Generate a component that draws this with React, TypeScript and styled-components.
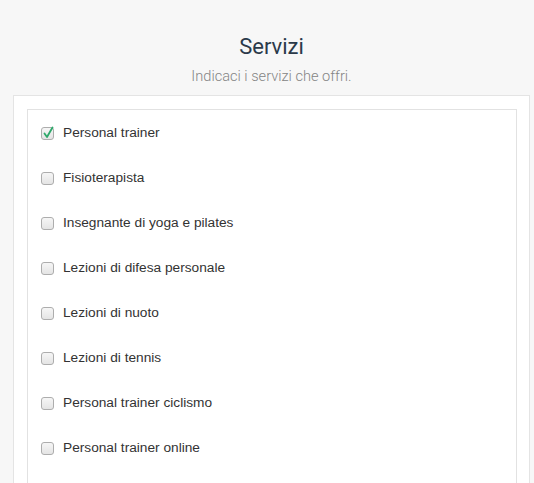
import React from 'react'
import styled, { createGlobalStyle } from 'styled-components'

const GlobalStyle = createGlobalStyle`
  html, body {
    margin: 0;
    padding: 0;
    background: #f7f7f7;
  }
`

const Page = styled.div`
  display: flex;
  flex-direction: column;
  height: 483px;
  overflow: hidden;
  padding-top: 34px;
  box-sizing: border-box;
`

const Header = styled.div`
  text-align: center;
  padding-left: 9px;
`

const Title = styled.h2`
  margin: 0;
  font-family: Roboto, "Liberation Sans", sans-serif;
  font-weight: 400;
  font-size: 22px;
  line-height: 26px;
  color: #2b3a4a;
`

const Subtitle = styled.p`
  margin: 3px 0 0;
  font-family: Roboto, "Liberation Sans", sans-serif;
  font-weight: 300;
  font-size: 14.6px;
  line-height: 26px;
  color: #858585;
`

const OuterCard = styled.div`
  flex: 1;
  display: flex;
  margin: 6px 4px 0 13px;
  background: #fff;
  border: 1px solid #e4e4e4;
  border-bottom: none;
  padding: 13px 12px 0 13px;
`

const InnerCard = styled.div`
  flex: 1;
  border: 1px solid #e2e2e2;
  border-bottom: none;
  padding: 0 13px;
`

const Row = styled.label`
  display: flex;
  align-items: center;
  gap: 9px;
  height: 45px;
  font-family: "Liberation Sans", Arial, sans-serif;
  font-size: 13.7px;
  color: #333;
`

const Box = styled.span<{ checked: boolean }>`
  position: relative;
  width: 11px;
  height: 11px;
  border: 1px solid #adadad;
  border-radius: 3px;
  background: linear-gradient(#f6f6f6, #e4e4e4);
  flex-shrink: 0;
  margin-top: 1px;
`

const Tick = styled.svg`
  position: absolute;
  left: 1px;
  top: -2px;
`

const services = [
  { label: 'Personal trainer', checked: true },
  { label: 'Fisioterapista', checked: false },
  { label: 'Insegnante di yoga e pilates', checked: false },
  { label: 'Lezioni di difesa personale', checked: false },
  { label: 'Lezioni di nuoto', checked: false },
  { label: 'Lezioni di tennis', checked: false },
  { label: 'Personal trainer ciclismo', checked: false },
  { label: 'Personal trainer online', checked: false },
]

export default function App() {
  return (
    <>
      <GlobalStyle />
      <Page>
        <Header>
          <Title>Servizi</Title>
          <Subtitle>Indicaci i servizi che offri.</Subtitle>
        </Header>
        <OuterCard>
          <InnerCard>
            {services.map((s) => (
              <Row key={s.label}>
                <Box checked={s.checked}>
                  {s.checked && (
                    <Tick width="11" height="13" viewBox="0 0 11 13">
                      <path d="M1.5 7.5 L4 11 L9.5 1.5" fill="none" stroke="#2fa86b" strokeWidth="1.8" strokeLinecap="round" strokeLinejoin="round" />
                    </Tick>
                  )}
                </Box>
                {s.label}
              </Row>
            ))}
          </InnerCard>
        </OuterCard>
      </Page>
    </>
  )
}
